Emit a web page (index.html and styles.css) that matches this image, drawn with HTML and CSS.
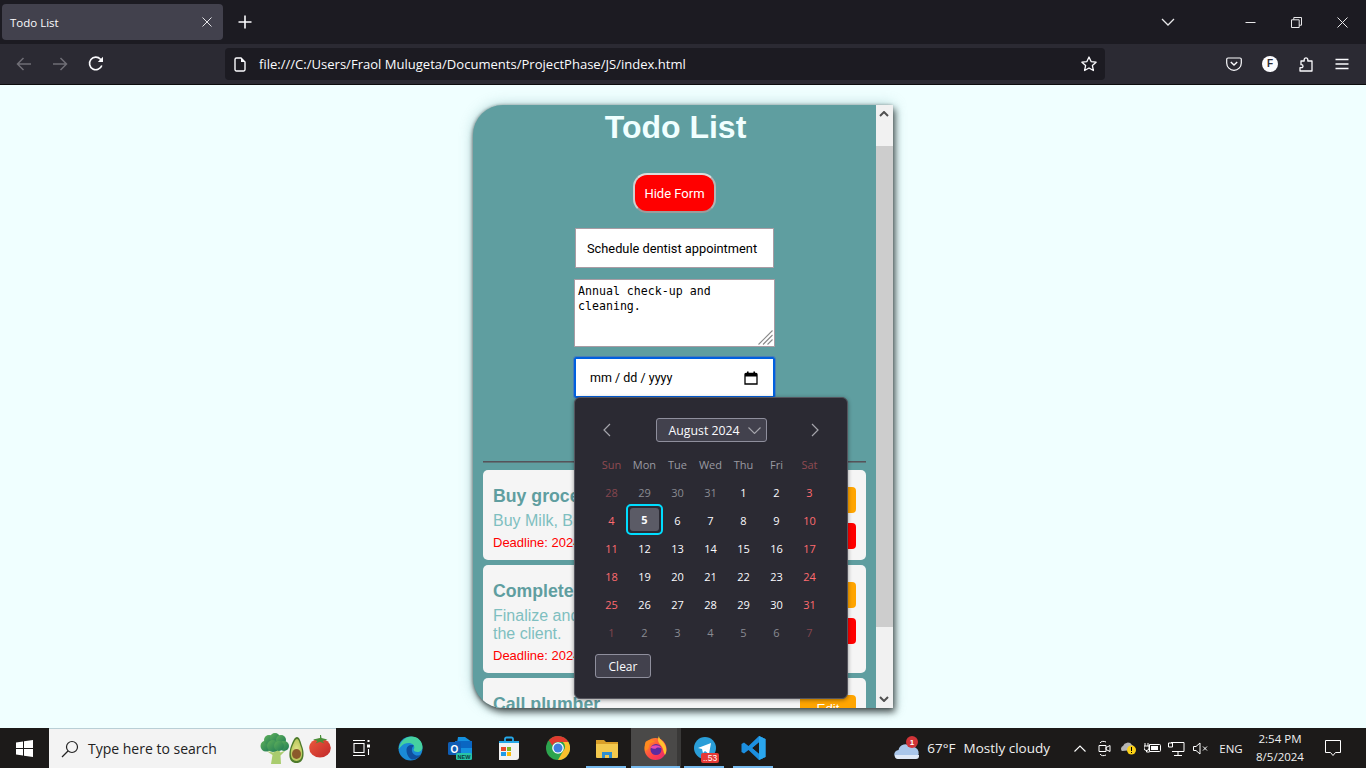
FILE: index.html
```html
<!DOCTYPE html>
<html lang="en">
<head>
<meta charset="utf-8">
<title>Todo List</title>
<link rel="stylesheet" href="styles.css">
</head>
<body>
<div class="window">
  <header class="titlebar">
    <div class="tab">
      <span class="tab-title">Todo List</span>
      <svg class="tab-close" width="10" height="10" viewBox="0 0 10 10"><path d="M.5.5l9 9M9.5.5l-9 9" stroke="#e4e4e8" fill="none"/></svg>
    </div>
    <svg class="newtab" width="14" height="14" viewBox="0 0 14 14"><path d="M7 .5v13M.5 7h13" stroke="#fbfbfe" stroke-width="1.6" fill="none"/></svg>
    <svg class="tabs-list" width="14" height="8" viewBox="0 0 14 8"><path d="M1 1l6 6 6-6" stroke="#e8e8ea" stroke-width="1.3" fill="none"/></svg>
    <div class="winbtn"><svg width="11" height="11" viewBox="0 0 11 11"><path d="M.5 5.500h10" stroke="#e8e8ea" fill="none"/></svg></div>
    <div class="winbtn"><svg width="11" height="11" viewBox="0 0 11 11"><path d="M.5 2.800h7.700v7.700H.5zM2.800 2.800V.5h7.700v7.700H8.200" stroke="#e8e8ea" fill="none"/></svg></div>
    <div class="winbtn"><svg width="11" height="11" viewBox="0 0 11 11"><path d="M.5.5l10 10M10.500.5l-10 10" stroke="#e8e8ea" fill="none"/></svg></div>
  </header>
  <nav class="toolbar">
    <svg class="nav-ico first" width="16" height="14" viewBox="0 0 16 14"><path d="M15 7H1.500M7.500 1l-6 6 6 6" stroke="#6f6e76" stroke-width="1.500" fill="none"/></svg>
    <svg class="nav-ico" width="16" height="14" viewBox="0 0 16 14"><path d="M1 7h13.500M8.500 1l6 6-6 6" stroke="#6f6e76" stroke-width="1.500" fill="none"/></svg>
    <svg class="nav-ico" width="16" height="16" viewBox="0 0 16 16"><path d="M13.800 9.500A6.300 6.300 0 1 1 12.500 3.200L14.500 5" stroke="#fbfbfe" stroke-width="1.600" fill="none"/><path d="M15 .8V6H9.800z" fill="#fbfbfe"/></svg>
    <div class="urlbar">
      <svg width="12" height="15" viewBox="0 0 12 15"><path d="M1 2.500A1.500 1.500 0 0 1 2.500 1H7l4 4v7.500A1.500 1.500 0 0 1 9.500 14h-7A1.500 1.500 0 0 1 1 12.500z" stroke="#fbfbfe" stroke-width="1.400" fill="none"/><path d="M7 1v4h4" fill="#fbfbfe"/></svg>
      <span class="url">file:///C:/Users/Fraol Mulugeta/Documents/ProjectPhase/JS/index.html</span>
      <svg class="star" width="16" height="16" viewBox="0 0 16 16"><path d="M8 1l2.100 4.600 5 .6-3.700 3.400 1 4.900L8 12l-4.400 2.500 1-4.900L.9 6.200l5-.6z" stroke="#fbfbfe" stroke-width="1.300" stroke-linejoin="round" fill="none"/></svg>
    </div>
    <div class="tool-icons">
      <svg width="16" height="14" viewBox="0 0 16 14"><path d="M2 1h12a1.300 1.300 0 0 1 1.300 1.300V6A7.300 7.300 0 0 1 .7 6V2.300A1.300 1.300 0 0 1 2 1z" stroke="#fbfbfe" stroke-width="1.200" fill="none"/><path d="M4.800 5L8 8l3.200-3" stroke="#fbfbfe" stroke-width="1.400" fill="none"/></svg>
      <span class="avatar">F</span>
      <svg width="15" height="16" viewBox="0 0 15 16"><path d="M2 5h3.200V3.200a1.900 1.900 0 0 1 3.600 0V5H13v10H1v-3.300h1.500a1.500 1.500 0 0 0 0-3H2z" stroke="#fbfbfe" stroke-width="1.300" stroke-linejoin="round" fill="none"/></svg>
      <svg width="14" height="12" viewBox="0 0 14 12"><path d="M.5 1.500h13M.5 6h13M.5 10.500h13" stroke="#fbfbfe" stroke-width="1.300" fill="none"/></svg>
    </div>
  </nav>
  <main class="viewport">
    <section class="card">
      <div class="card-main">
        <h1 class="heading">Todo List</h1>
        <button class="toggle">Hide Form</button>
        <form class="form">
          <input class="field-title" type="text" value="Schedule dentist appointment">
          <div class="desc-wrap">
            <textarea class="field-desc">Annual check-up and cleaning.</textarea>
            <svg class="grip" width="15" height="15" viewBox="0 0 15 15"><path d="M14.500 .5l-14 14M14.500 5l-9.500 9.500M14.500 9.500l-5 5" stroke="#8a8a8a" stroke-width="1.100" fill="none"/></svg>
          </div>
          <div class="date-wrap">
            <div class="field-date">
              <span>mm / dd / yyyy</span>
              <svg width="14" height="14" viewBox="0 0 14 14"><path d="M1 3.500A1 1 0 0 1 2 2.500h10a1 1 0 0 1 1 1V13H1z" stroke="#000" stroke-width="1.300" fill="none"/><path d="M1 2.500h12V5.500H1zM3 .5h1.600v2H3zM9.400 .5H11v2H9.400z" fill="#000"/></svg>
            </div>
            <div class="picker">
              <div class="picker-head">
                <svg width="8" height="14" viewBox="0 0 8 14"><path d="M7 1L1 7l6 6" stroke="#a5a5ac" stroke-width="1.200" fill="none"/></svg>
                <div class="month">August 2024<svg width="13" height="7" viewBox="0 0 13 7"><path d="M.5.5l6 6 6-6" stroke="#a5a5ac" stroke-width="1.100" fill="none"/></svg></div>
                <svg width="8" height="14" viewBox="0 0 8 14"><path d="M1 1l6 6-6 6" stroke="#a5a5ac" stroke-width="1.200" fill="none"/></svg>
              </div>
              <div class="days">
                <span class="wk end">Sun</span><span class="wk">Mon</span><span class="wk">Tue</span><span class="wk">Wed</span><span class="wk">Thu</span><span class="wk">Fri</span><span class="wk end">Sat</span>
                <span class="off-end">28</span><span class="off">29</span><span class="off">30</span><span class="off">31</span><span>1</span><span>2</span><span class="we">3</span>
                <span class="we">4</span><span class="sel"><b>5</b></span><span>6</span><span>7</span><span>8</span><span>9</span><span class="we">10</span>
                <span class="we">11</span><span>12</span><span>13</span><span>14</span><span>15</span><span>16</span><span class="we">17</span>
                <span class="we">18</span><span>19</span><span>20</span><span>21</span><span>22</span><span>23</span><span class="we">24</span>
                <span class="we">25</span><span>26</span><span>27</span><span>28</span><span>29</span><span>30</span><span class="we">31</span>
                <span class="off-end">1</span><span class="off">2</span><span class="off">3</span><span class="off">4</span><span class="off">5</span><span class="off">6</span><span class="off-end">7</span>
              </div>
              <button type="button" class="clear">Clear</button>
            </div>
          </div>
        </form>
        <hr class="rule">
        <ul class="todos">
          <li class="todo">
            <div class="todo-text"><h3>Buy groceries</h3><p>Buy Milk, Bread, Eggs</p><small>Deadline: 2024-08-06</small></div>
            <div class="todo-actions"><button class="edit">Edit</button><button class="del">Delete</button></div>
          </li>
          <li class="todo">
            <div class="todo-text"><h3>Complete project</h3><p>Finalize and submit the report for the client.</p><small>Deadline: 2024-08-10</small></div>
            <div class="todo-actions"><button class="edit">Edit</button><button class="del">Delete</button></div>
          </li>
          <li class="todo">
            <div class="todo-text"><h3>Call plumber</h3><p>Fix the kitchen sink.</p><small>Deadline: 2024-08-12</small></div>
            <div class="todo-actions"><button class="edit">Edit</button><button class="del">Delete</button></div>
          </li>
        </ul>
      </div>
      <div class="scrollbar">
        <svg class="sb-up" width="10" height="6" viewBox="0 0 10 6"><path d="M1 5l4-4 4 4" stroke="#505050" stroke-width="2" fill="none"/></svg>
        <div class="sb-thumb"></div>
        <svg class="sb-down" width="10" height="6" viewBox="0 0 10 6"><path d="M1 1l4 4 4-4" stroke="#505050" stroke-width="2" fill="none"/></svg>
      </div>
    </section>
  </main>
  <footer class="taskbar">
    <div class="tb-cell">
      <svg width="17" height="17" viewBox="0 0 17 17"><path d="M0 2.400L7 1.400V8H0zM8 1.300L17 0V8H8zM0 9h7v6.600L0 14.600zM8 9h9v8L8 15.700z" fill="#fff"/></svg>
    </div>
    <div class="search">
      <svg width="18" height="18" viewBox="0 0 18 18"><circle cx="11" cy="7" r="5.500" stroke="#222" stroke-width="1.200" fill="none"/><path d="M7 11l-6 6" stroke="#222" stroke-width="1.300" fill="none"/></svg>
      <span class="search-text">Type here to search</span>
      <svg class="veg" width="72" height="32" viewBox="0 0 72 32">
        <defs>
          <linearGradient id="brocc" x1="0" y1="0" x2="1" y2="1"><stop offset="0" stop-color="#5fb05a"/><stop offset="1" stop-color="#1f7a55"/></linearGradient>
          <linearGradient id="tom" x1="0" y1="0" x2="1" y2="1"><stop offset="0" stop-color="#ee5a3c"/><stop offset="1" stop-color="#c0282a"/></linearGradient>
          <radialGradient id="avo"><stop offset="0" stop-color="#e3e38a"/><stop offset="1" stop-color="#b9c75c"/></radialGradient>
        </defs>
        <path d="M11 31l1.500-9-6-4 7 1.500 2-3 3 0 2 3 5-2-5 5 .5 8.500z" fill="#a9cc6e"/>
        <g fill="url(#brocc)">
          <circle cx="6" cy="13" r="5.500"/><circle cx="9" cy="7" r="5"/><circle cx="15" cy="5" r="5"/><circle cx="21" cy="7" r="5"/><circle cx="24" cy="13" r="5"/><circle cx="13" cy="13" r="6"/><circle cx="19" cy="13" r="5"/>
        </g>
        <path d="M37 4c2.500 0 3.500 4 5 9 2.500 6 3 17-5.500 17S28.500 20 31 13c2-5 3.500-9 6-9z" fill="#4d7a2b"/>
        <path d="M37 6c2 0 2.500 4 4 8 2 5 2 14-4.500 14S30 19 32 14c2-4 3-8 5-8z" fill="url(#avo)"/>
        <ellipse cx="36.500" cy="21" rx="4.500" ry="5" fill="#8b5a2b"/>
        <ellipse cx="60" cy="15" rx="10.800" ry="9.500" fill="url(#tom)"/>
        <path d="M60 5l-7 1.500 4.500 1.500-2 2.500 4.500-1.800 4.500 1.800-2-2.500 5-1.500-6-1.500-.5-3h-1z" fill="#4a8f3a"/>
      </svg>
    </div>
    <div class="tb-cell wide">
      <svg width="18" height="16" viewBox="0 0 18 16"><path d="M2 3.500h10v9H2zM1 .5h12M1 15.500h12M16.500 9v6" stroke="#fff" stroke-width="1.100" fill="none"/><path d="M15 4.500h3v3h-3zM15.500 0h2v2h-2z" fill="#fff"/></svg>
    </div>
    <div class="tb-cell">
      <svg width="25" height="25" viewBox="0 0 25 25"><circle cx="12.500" cy="12.500" r="12" fill="#1a8ad6"/><path d="M.7 13C2 5 8 .5 13.500.5c6.500 0 11 5 11 10.500 0 3.500-2.500 5-5 5-2.500 0-4-1-4-2.500 1-1 1.500-3-.5-5C13 6 6 6.500 3.500 10 2.500 11 1.500 12 .7 13z" fill="#45d1a0"/><path d="M8.500 14c0-3 2-5 5-5 1.500 0 2.500.5 2.500 1-3 1-3 7 1 9 2 1 4.500.5 6-.5-2 3-5.500 5-9 5-3-1-5.500-5-5.500-9.500z" fill="#0f4f9e"/></svg>
    </div>
    <div class="tb-cell">
      <svg width="24" height="25" viewBox="0 0 24 25"><path d="M10 1h7l7 5v13H7z" fill="#1490df"/><path d="M16 5h8v7h-8zM7 5h9v7H7z" fill="#0a66c2"/><rect x="0" y="6" width="13" height="13" rx="1.500" fill="#0f5db4"/><text class="o-letter" x="6.500" y="16.500" text-anchor="middle">O</text><rect x="8" y="17" width="16" height="7" rx="1.500" fill="#27c3a8"/><text class="new-letter" x="16" y="22.800" text-anchor="middle">NEW</text></svg>
    </div>
    <div class="tb-cell">
      <svg width="20" height="24" viewBox="0 0 20 24"><path d="M6 7V3a1.500 1.500 0 0 1 1.500-1.500h5A1.500 1.500 0 0 1 14 3v4" stroke="#25a8e8" stroke-width="1.800" fill="none"/><path d="M0 6h20v15a3 3 0 0 1-3 3H0z" fill="#f2f2f2"/><path d="M0 5h20v2H0z" fill="#25a8e8"/><path d="M2 11h5v4H2z" fill="#ea4a2b"/><path d="M8 11h4v4H8z" fill="#7db824"/><path d="M2 16h5v4H2z" fill="#1e9ae8"/><path d="M8 16h4v4H8z" fill="#fbbb0a"/></svg>
    </div>
    <div class="tb-cell">
      <svg width="24" height="24" viewBox="0 0 24 24"><circle cx="12" cy="12" r="12" fill="#2da44e"/><path d="M12 0a12 12 0 0 1 10.400 6H12a6 6 0 0 0-5.600 3.800L2.800 4.300A12 12 0 0 1 12 0z" fill="#e03a2f"/><path d="M22.400 6A12 12 0 0 1 12 24l5.200-9a6 6 0 0 0-.3-9z" fill="#fbc02d"/><circle cx="12" cy="12" r="5.800" fill="#fff"/><circle cx="12" cy="12" r="4.500" fill="#3f7fe0"/></svg>
    </div>
    <div class="tb-cell folder">
      <svg width="22" height="19" viewBox="0 0 22 19"><path d="M0 1h8l2 2h12v3H0z" fill="#d99f29"/><path d="M0 5h22v13a1 1 0 0 1-1 1H1a1 1 0 0 1-1-1z" fill="#f3c94e"/><path d="M6 13h10v6h-3v-3H9v3H6z" fill="#2f8fd0"/></svg>
    </div>
    <div class="tb-cell active">
      <svg width="23" height="24" viewBox="0 0 23 24">
        <defs><linearGradient id="fx" x1="0" y1="0" x2="1" y2="1"><stop offset="0" stop-color="#ff9a1f"/><stop offset=".6" stop-color="#ff3f4a"/><stop offset="1" stop-color="#e0267a"/></linearGradient></defs>
        <circle cx="11.500" cy="13" r="11" fill="url(#fx)"/>
        <path d="M15 0c0 3 3 4 5 7 3 4.500 3 9 1 12-2-3-1.500-6-3-8-1.500-2.500-4-4-4-7 0-2 .5-3 1-4z" fill="#ffc02e"/>
        <path d="M1.500 6C5 3 9 4 11 6c-3 0-5 1-6 3 .5 3-1 5-4 6-.5-3-.5-6 .5-9z" fill="#ff8a1f"/>
        <circle cx="12" cy="13.500" r="5.500" fill="#5b2ba0"/>
        <path d="M6.500 11.500c2-2.500 8-3.500 11 .5-3-1-5-.5-6 .8-2 0-4-.3-5-1.300z" fill="#e54bb0"/>
      </svg>
      <span class="active-edge"></span>
    </div>
    <div class="tb-cell running">
      <svg width="22" height="22" viewBox="0 0 22 22"><circle cx="11" cy="11" r="11" fill="#2a9ed8"/><path d="M4 11l13-5-2 11-4-3-2 2-1-4z" fill="#fff"/></svg>
      <span class="badge">..53</span>
    </div>
    <div class="tb-cell running">
      <svg width="25" height="24" viewBox="0 0 24 24"><path d="M17.500 0L24 3v18l-6.500 3L7 14l-4.500 3.500L0 16V8l2.500-1.500L7 10zM17.500 6.500L11 12l6.500 5.500z" fill="#1c8fe0"/><path d="M17.500 0L24 3v18l-6.500 3z" fill="#2aa6ee"/><path d="M17.500 6.500L11 12l6.500 5.500z" fill="#1c1a19"/></svg>
    </div>
    <div class="tray">
      <div class="weather">
        <svg class="cloud" width="26" height="26" viewBox="0 0 26 26"><path d="M5 24a4.500 4.500 0 0 1-.5-9A7 7 0 0 1 17 12a5.500 5.500 0 0 1 3 12z" fill="#a9c6ea"/><path d="M1 20h24v1a3 3 0 0 1-3 3H4a3 3 0 0 1-3-3z" fill="#dfe9f7"/><circle cx="18" cy="7" r="6" fill="#d13438"/><text class="cloud-n" x="18" y="10" text-anchor="middle">1</text></svg>
        <span>67°F</span><span>Mostly cloudy</span>
      </div>
      <div class="tray-ico"><svg width="12" height="7" viewBox="0 0 12 7"><path d="M.5 6.500L6 1l5.500 5.500" stroke="#fff" stroke-width="1.100" fill="none"/></svg></div>
      <div class="tray-ico"><svg width="13" height="17" viewBox="0 0 13 17"><path d="M1 5.500h7v6H1zM8 7.500l4-2v6l-4-2zM2 3c1-2 4-2 6-1M2 14c1 2 4 2 6 1" stroke="#fff" fill="none"/></svg></div>
      <div class="tray-ico"><svg width="17" height="14" viewBox="0 0 17 14"><path d="M2 10a3 3 0 0 1 1-5 5 5 0 0 1 9-1 3 3 0 0 1 1 5z" fill="#b5b5b5"/><circle cx="11.500" cy="9" r="4.500" fill="#fcd116"/><path d="M11 6h1v4h-1zM11 11h1v1h-1z" fill="#000"/></svg></div>
      <div class="tray-ico"><svg width="17" height="12" viewBox="0 0 17 12"><path d="M5.500 2.500h10a1 1 0 0 1 1 1v5a1 1 0 0 1-1 1h-10z" stroke="#fff" fill="none"/><path d="M7 4h7v4H7z" fill="#fff"/><path d="M1 1v3M4 1v3M0 4h5v2a2.500 2.500 0 0 1-5 0zM2.500 8v2h3" stroke="#fff" fill="none"/></svg></div>
      <div class="tray-ico"><svg width="17" height="15" viewBox="0 0 17 15"><path d="M3 1.500h13v9H4M10 11v3M6 14.500h8M.5 2h4v4h-4z" stroke="#fff" fill="none"/></svg></div>
      <div class="tray-ico"><svg width="15" height="13" viewBox="0 0 15 13"><path d="M.5 4.500h2.500L7 1v11L3 8.500H.5zM10 4.500l4 4M14 4.500l-4 4" stroke="#fff" fill="none"/></svg></div>
      <div class="lang">ENG</div>
      <div class="clock"><span>2:54 PM</span><span>8/5/2024</span></div>
      <div class="notif"><svg width="16" height="16" viewBox="0 0 16 16"><path d="M.5.5h15v12h-5L8 15.500 5.500 12.500h-5z" stroke="#fff" fill="none"/></svg></div>
    </div>
  </footer>
</div>
</body>
</html>
```
FILE: styles.css
```css
* { box-sizing: border-box; }
html, body { margin: 0; padding: 0; height: 100%; overflow: hidden; }
body { font-family: "Open Sans", "Noto Sans", sans-serif; }
.window { width: 1366px; height: 768px; display: flex; flex-direction: column; }

.titlebar { height: 44px; background: #1c1b22; display: flex; align-items: center; padding-left: 2px; flex: none; }
.tab { width: 221px; height: 36px; background: #42414d; border-radius: 4px; display: flex; align-items: center; justify-content: space-between; padding: 0 11px 0 8px; }
.tab-title { font-size: 11.5px; color: #fbfbfe; }
.newtab { margin-left: 15px; }
.tabs-list { margin-left: 909px; margin-right: 52px; }
.winbtn { width: 46px; height: 44px; display: flex; align-items: center; justify-content: center; flex: none; }

.toolbar { height: 41px; background: #2b2a33; border-bottom: 1px solid #0c0c0d; display: flex; align-items: center; flex: none; }
.nav-ico { margin-left: 20px; flex: none; }
.nav-ico.first { margin-left: 16px; }
.urlbar { margin-left: 121px; width: 880px; height: 32px; background: #1c1b22; border-radius: 4px; display: flex; align-items: center; padding: 0 8px 0 9px; color: #fbfbfe; }
.url { font-size: 13.06px; margin-left: 13px; white-space: nowrap; flex: 1; }
.tool-icons { margin-left: 121px; display: flex; align-items: center; gap: 21px; }
.avatar { width: 16px; height: 16px; margin-left: -1px; border-radius: 50%; background: #fbfbfe; color: #2b2a33; font: bold 10px/16px "Liberation Sans", sans-serif; text-align: center; }

.viewport { flex: 1; background: #f0ffff; display: flex; justify-content: center; padding: 20px 0; min-height: 0; }
.card { width: 420px; display: flex; background: #5f9ea0; border-radius: 30px 0 0 30px; box-shadow: 2px 4px 7px rgba(0,0,0,.65), -1px 0 3px rgba(0,0,0,.25), 0 0 14px rgba(95,158,160,.45); }
.card-main { flex: 1; min-width: 0; border-radius: 30px 0 0 30px; overflow: hidden; display: flex; flex-direction: column; align-items: center; font-family: "Liberation Sans", Arial, sans-serif; }
.heading { margin: 0; padding-top: 4px; font-size: 32px; line-height: 37px; color: #f0ffff; font-weight: bold; flex: none; position: relative; left: 1px; }
.toggle { margin-top: 27px; width: 83px; height: 40px; flex: none; background: #f00; color: #fff; border: 2px solid; border-color: #dcdcdc #b5b5b5 #9c9c9c #cfcfcf; border-radius: 14px; font-family: Roboto, sans-serif; font-size: 13px; padding: 0; }
.form { margin-top: 15px; display: flex; flex-direction: column; align-items: center; flex: none; }
.field-title { width: 199px; height: 40px; background: #fff; border: 1px solid #a89ca4; padding: 0 11px; font-family: Roboto, sans-serif; font-size: 12.8px; color: #000; outline: none; }
.desc-wrap { margin-top: 11px; position: relative; width: 201px; height: 68px; }
.field-desc { width: 201px; height: 68px; display: block; resize: none; overflow: hidden; border: 1px solid #a89ca4; padding: 4px 3px; font-family: "DejaVu Sans Mono", monospace; font-size: 11.6px; line-height: 15px; color: #000; background: #fff; outline: none; }
.grip { position: absolute; right: 2px; bottom: 2px; }
.date-wrap { margin-top: 10px; position: relative; width: 201px; }
.field-date { height: 41px; background: #fff; border: 2px solid #0060df; outline: 1px solid #4a7fb5; border-radius: 2px; display: flex; align-items: center; justify-content: space-between; padding: 0 15px 0 14px; font-family: Roboto, sans-serif; font-size: 12.5px; color: #000; }

.picker { position: absolute; top: 40px; left: 0; width: 274px; height: 302px; background: #2b2a33; border: 1px solid #55555e; border-radius: 6px; padding: 20px 20px 0; font-family: "Open Sans", "Noto Sans", sans-serif; color: #fbfbfe; box-shadow: 0 1px 4px rgba(0,0,0,.4); z-index: 2; }
.picker-head { height: 24px; display: flex; align-items: center; justify-content: space-between; padding: 0 8px; }
.month { width: 111px; height: 24px; display: flex; align-items: center; justify-content: space-between; padding: 0 5px 0 12px; background: #42414d; border: 1px solid #8f8f9d; border-radius: 3px; font-size: 12.3px; }
.days { margin-top: 9px; display: grid; grid-template-columns: repeat(7, 33px); grid-auto-rows: 28px; font-size: 11px; text-align: center; align-items: center; justify-items: center; }
.days span { display: block; width: 33px; line-height: 28px; }
.wk { color: #9a9aa2; }
.wk.end { color: #8e4a52; }
.we { color: #ff6b70; }
.off { color: #8a8a92; }
.off-end { color: #85464f; }
.days .sel { width: 37px; height: 31px; margin-top: -3px; line-height: 23px; border: 2px solid #00ddff; border-radius: 5px; background: #2b2a33; padding: 2px; }
.sel b { display: block; height: 23px; line-height: 23px; background: #5b5b66; border-radius: 3px; font-weight: bold; }
.clear { margin-top: 7px; width: 56px; height: 24px; background: #42414d; border: 1px solid #8f8f9d; border-radius: 3px; color: #fbfbfe; font-family: inherit; font-size: 12px; padding: 0; display: block; }

.rule { margin: 63px 0 0; width: 383px; height: 2px; border: 0; border-top: 1px solid #55535a; border-bottom: 1px solid #5c7477; flex: none; }
.todos { margin: 7px 0 0; padding: 0; list-style: none; width: 383px; display: flex; flex-direction: column; gap: 5px; flex: none; }
.todo { background: #f5f5f5; border-radius: 5px; padding: 17px 10px 9px; display: flex; justify-content: space-between; }
.todo-text { width: 250px; margin-top: -1px; }
.todo-text h3 { margin: 0; font-size: 17.7px; line-height: 20px; color: #5f9ea0; }
.todo-text p { margin: 6px 0 0; font-size: 16px; line-height: 18px; color: #7fbfc0; }
.todo-text small { display: block; margin-top: 5px; font-size: 13px; line-height: 16px; color: #f00; }
.todo-actions { width: 56px; display: flex; flex-direction: column; gap: 10px; }
.todo-actions button { height: 26px; border: 0; border-radius: 4px; color: #fff; font-family: inherit; font-size: 13.3px; padding: 0; }
.edit { background: #ffa500; }
.del { background: #f00; }

.scrollbar { width: 17px; flex: none; background: #f1f1f1; position: relative; padding-top: 41px; }
.sb-thumb { height: 481px; background: #cdcdcd; }
.sb-up { position: absolute; top: 6px; left: 3px; }
.sb-down { position: absolute; bottom: 6px; left: 3px; }

.taskbar { height: 40px; flex: none; background: #1c1a19; display: flex; align-items: stretch; color: #fff; }
.tb-cell { width: 49px; display: flex; align-items: center; justify-content: center; position: relative; flex: none; }
.tb-cell.wide { width: 50px; }
.search { width: 287px; background: #f3f3f3; border-top: 1px solid #b9cfd6; display: flex; align-items: center; padding: 0 0 0 12px; flex: none; color: #222; }
.search-text { font-size: 14px; margin-left: 9px; flex: 1; white-space: nowrap; }
.veg { margin-right: 4px; }
.active { background: #4a4948; }
.active::after, .running::after, .folder::after { content: ""; position: absolute; bottom: 0; height: 2px; background: #76b9ed; }
.active::after { left: 0; right: 0; }
.running::after, .folder::after { left: 4px; right: 5px; }
.active-edge { position: absolute; top: 0; right: -1px; width: 4px; height: 100%; background: #3a3938; }
.badge { position: absolute; left: 21px; top: 25px; background: #e53935; color: #fff; font: 8.5px/10px "Liberation Sans", sans-serif; padding: 0 2px; border-radius: 2px; }
.o-letter { font: bold 10px "Liberation Sans", sans-serif; fill: #fff; }
.new-letter { font: bold 5.5px "Liberation Sans", sans-serif; fill: #0b3b3b; }
.cloud-n { font: bold 8px "Liberation Sans", sans-serif; fill: #fff; }

.tray { margin-left: auto; display: flex; align-items: center; height: 100%; }
.weather { display: flex; align-items: center; font-size: 13.5px; gap: 8px; margin-right: 18px; color: #f0f0f0; }
.cloud { margin-right: -1px; }
.tray-ico { width: 24px; height: 100%; display: flex; align-items: center; justify-content: center; }
.lang { width: 38px; font-size: 11.5px; text-align: center; color: #f0f0f0; }
.clock { width: 60px; display: flex; flex-direction: column; align-items: center; font-size: 11.5px; line-height: 18px; color: #f0f0f0; }
.notif { width: 56px; display: flex; align-items: center; justify-content: center; padding-right: 10px; }
```
